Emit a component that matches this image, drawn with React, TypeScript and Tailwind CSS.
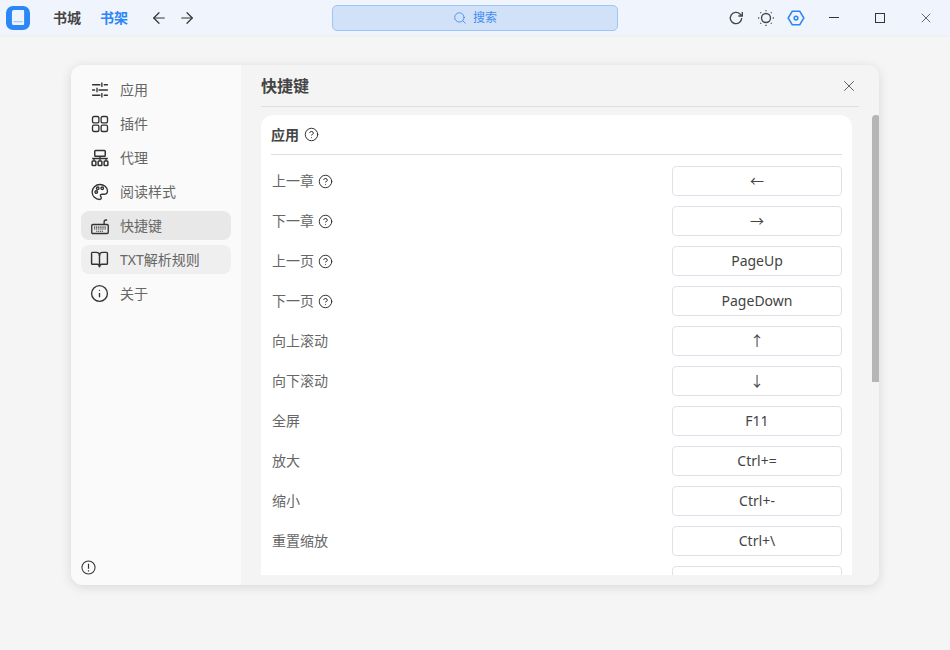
import { ArrowLeft, ArrowRight, BookOpen, CircleHelp, Info, Search, X } from "lucide-react";
import type { ReactNode } from "react";

const FONT = "font-['Noto_Sans','Noto_Sans_CJK_SC',sans-serif]";

function Svg({ children, className }: { children: ReactNode; className?: string }) {
  return (
    <svg viewBox="0 0 24 24" fill="none" stroke="currentColor" strokeWidth="1.8" className={className}>
      {children}
    </svg>
  );
}

const SlidersIcon = () => (
  <Svg className="h-[18px] w-[18px]">
    <path d="M1.500 5h11M17 5h5.500M1.500 12h4M10 12h12.500M1.500 19h11M17 19h5.500" />
    <path d="M14.500 2v6M8 9v6M14.500 16v6" />
  </Svg>
);

const PluginIcon = () => (
  <Svg className="h-[18px] w-[18px]">
    <rect x="2" y="2" width="8.500" height="8.500" rx="2" />
    <rect x="13.500" y="2" width="8.500" height="8.500" rx="2" />
    <rect x="2" y="13.500" width="8.500" height="8.500" rx="2" />
    <rect x="13.500" y="13.500" width="8.500" height="8.500" rx="2" />
  </Svg>
);

const ProxyIcon = () => (
  <Svg className="h-[18px] w-[18px]">
    <rect x="5" y="2" width="14" height="7.500" rx="1" strokeWidth="2" />
    <path d="M1.500 12.500h21" strokeWidth="2" />
    <path d="M12 9.500v6M4 12.500v3M20 12.500v3" />
    <rect x="1.500" y="16" width="5" height="6" rx="1" strokeWidth="2" />
    <rect x="9.500" y="16" width="5" height="6" rx="1" strokeWidth="2" />
    <rect x="17.500" y="16" width="5" height="6" rx="1" strokeWidth="2" />
  </Svg>
);

const PaletteIcon = () => (
  <Svg className="h-[18px] w-[18px]">
    <path d="M12 2c-5.800 0-10.500 4.400-10.500 10s4.700 10 10 10c1.500 0 2.300-1 2.300-2.200 0-1.500-1.300-1.800-1.300-3.100 0-1.100 1-1.700 2-1.700h2.500c3.300 0 5-1.700 5-4.300C22 5.500 17 2 12 2z" />
    <circle cx="7" cy="12" r="1.700" />
    <circle cx="9" cy="7" r="1.700" />
    <circle cx="15" cy="7" r="1.700" />
  </Svg>
);

const KeyboardIcon = () => (
  <Svg className="h-[18px] w-[18px]">
    <rect x="1" y="10" width="22" height="12" rx="1.500" />
    <path d="M17.500 10V6.500c0-1.500 1-2.500 2.500-2.500h1.500" />
    <path d="M4 13.500h16M4 16h16M7 19h10" strokeWidth="1.500" strokeDasharray="1.500 1" />
  </Svg>
);

const AlertIcon = () => (
  <Svg className="h-[15px] w-[15px]">
    <circle cx="12" cy="12" r="10.500" strokeWidth="1.700" />
    <path d="M12 6v8M12 16.500v2" strokeWidth="1.900" />
  </Svg>
);

const sideItems: { label: string; icon: ReactNode; bg?: string }[] = [
  { label: "应用", icon: <SlidersIcon /> },
  { label: "插件", icon: <PluginIcon /> },
  { label: "代理", icon: <ProxyIcon /> },
  { label: "阅读样式", icon: <PaletteIcon /> },
  { label: "快捷键", icon: <KeyboardIcon />, bg: "bg-[#e8e8e8]" },
  { label: "TXT解析规则", icon: <BookOpen size={19} strokeWidth={1.8} />, bg: "bg-[#efefef]" },
  { label: "关于", icon: <Info size={19} strokeWidth={1.7} /> },
];

const shortcuts: { label: string; keys: string; help?: boolean }[] = [
  { label: "上一章", keys: "←", help: true },
  { label: "下一章", keys: "→", help: true },
  { label: "上一页", keys: "PageUp", help: true },
  { label: "下一页", keys: "PageDown", help: true },
  { label: "向上滚动", keys: "↑" },
  { label: "向下滚动", keys: "↓" },
  { label: "全屏", keys: "F11" },
  { label: "放大", keys: "Ctrl+=" },
  { label: "缩小", keys: "Ctrl+-" },
  { label: "重置缩放", keys: "Ctrl+\\" },
  { label: "", keys: "" },
];

function TopBar() {
  return (
    <header className="flex h-[35px] shrink-0 items-center bg-[#f0f4fd] shadow-[0_1px_2px_rgba(0,0,0,0.04)]">
      <div className="ml-[6px] flex h-6 w-6 items-center justify-center rounded-[7px] bg-[#2b86f6]">
        <svg viewBox="0 0 16 18" className="h-[17px] w-[15px]">
          <path d="M3 1h10a1 1 0 0 1 1 1v14a1 1 0 0 1-1 1H3a2 2 0 0 1-2-2V3a2 2 0 0 1 2-2z" fill="#eef4fd" />
          <path d="M2.500 13.500h10" stroke="#8db9f3" strokeWidth="1" />
        </svg>
      </div>
      <span className="ml-[23px] text-[14px] font-semibold text-[#444]">书城</span>
      <span className="ml-[19px] text-[14px] font-semibold text-[#2b86f6]">书架</span>
      <ArrowLeft size={18} strokeWidth={1.6} className="ml-[22px] text-[#333]" />
      <ArrowRight size={18} strokeWidth={1.6} className="ml-[10px] text-[#333]" />
      <div className="ml-[136px] flex h-[26px] w-[286px] items-center justify-center gap-[6px] rounded-[5px] border border-[#9cc5f8] bg-[#d0e1f8] text-[12px] text-[#3f8cf0]">
        <Search size={14} strokeWidth={1.5} />
        <span>搜索</span>
      </div>
      <Svg className="ml-[110px] h-[16px] w-[16px] text-[#444]">
        <path d="M20.500 12a8.500 8.500 0 1 1-2.500-6l3 2.500" strokeWidth="2" />
        <path d="M21.500 3v6h-6" strokeWidth="2" />
      </Svg>
      <Svg className="ml-[13px] h-[18px] w-[18px] text-[#444]">
        <circle cx="12" cy="12" r="6" strokeWidth="1.800" />
        <path d="M12 1.500v1.500M12 21v1.500M1.500 12H3M21 12h1.500M4.500 4.500l1 1M18.500 18.500l1 1M4.500 19.500l1-1M18.500 5.500l1-1" strokeWidth="1.800" />
      </Svg>
      <Svg className="ml-[12px] h-[18px] w-[18px] text-[#2b86f6]">
        <path d="M7 3h10l5.500 9-5.500 9H7l-5.500-9z" strokeWidth="2" />
        <circle cx="12" cy="12" r="2.500" strokeWidth="2" />
      </Svg>
      <span className="ml-[24px] h-px w-[10px] bg-[#333]" />
      <span className="ml-[36px] h-[10px] w-[10px] border border-[#333]" />
      <X size={16} strokeWidth={1.1} className="ml-[33px] text-[#333]" />
    </header>
  );
}

function Sidebar() {
  return (
    <aside className="flex w-[170px] shrink-0 flex-col bg-[#fafafa] px-[10px] pb-[10px] pt-[10px]">
      <nav className="flex flex-col gap-[5px]">
        {sideItems.map((item) => (
          <div
            key={item.label}
            className={`flex h-[29px] items-center gap-[11px] rounded-lg pl-[9px] text-[14px] leading-none text-[#666] ${item.bg ?? ""}`}
          >
            <span className="flex w-[19px] justify-center text-[#333]">{item.icon}</span>
            <span>{item.label}</span>
          </div>
        ))}
      </nav>
      <div className="mt-auto flex text-[#333]">
        <AlertIcon />
      </div>
    </aside>
  );
}

function Row({ label, keys, help }: { label: string; keys: string; help?: boolean }) {
  return (
    <div className="flex h-[30px] shrink-0 items-center justify-between">
      <div className="flex items-center gap-[4px] pl-px text-[14px] leading-none text-[#666]">
        <span>{label}</span>
        {help && <CircleHelp size={15} strokeWidth={1.6} className="text-[#333]" />}
      </div>
      <div className="flex h-[30px] w-[170px] items-center justify-center rounded-[4px] border border-[#e0e0e8] bg-white pb-px text-[14px] text-[#444]">
        {keys}
      </div>
    </div>
  );
}

function Content() {
  return (
    <section className="relative flex min-w-0 flex-1 flex-col bg-[#f4f4f4]">
      <div className="mx-[20px] flex h-[42px] shrink-0 items-center justify-between border-b border-[#dcdde6] pr-[1px]">
        <h2 className="text-[16px] font-semibold leading-none text-[#444]">快捷键</h2>
        <X size={18} strokeWidth={1.1} className="text-[#444]" />
      </div>
      <div className="ml-[20px] mt-[8px] h-[460px] w-[591px] overflow-hidden rounded-t-xl bg-white px-[10px]">
        <div className="flex h-[40px] items-center gap-[5px] border-b border-[#dcdde6] text-[14px] font-semibold leading-none text-[#444]">
          <span>应用</span>
          <CircleHelp size={15} strokeWidth={1.6} className="text-[#333]" />
        </div>
        <div className="mt-[11px] flex flex-col gap-[10px]">
          {shortcuts.map((row, i) => (
            <Row key={i} {...row} />
          ))}
        </div>
      </div>
      {/* scrollbar */}
      <div className="absolute right-[-1px] top-[50px] h-[267px] w-[8px] rounded-t-full rounded-b-sm bg-[#b6b6b6]" />
    </section>
  );
}

export default function App() {
  return (
    <div className={`flex h-[650px] w-[950px] flex-col overflow-hidden bg-[#f5f5f5] ${FONT}`}>
      <TopBar />
      <main className="flex flex-1 justify-center pt-[30px]">
        <div className="flex h-[520px] w-[808px] overflow-hidden rounded-xl shadow-[0_2px_12px_rgba(0,0,0,0.12)]">
          <Sidebar />
          <Content />
        </div>
      </main>
    </div>
  );
}
